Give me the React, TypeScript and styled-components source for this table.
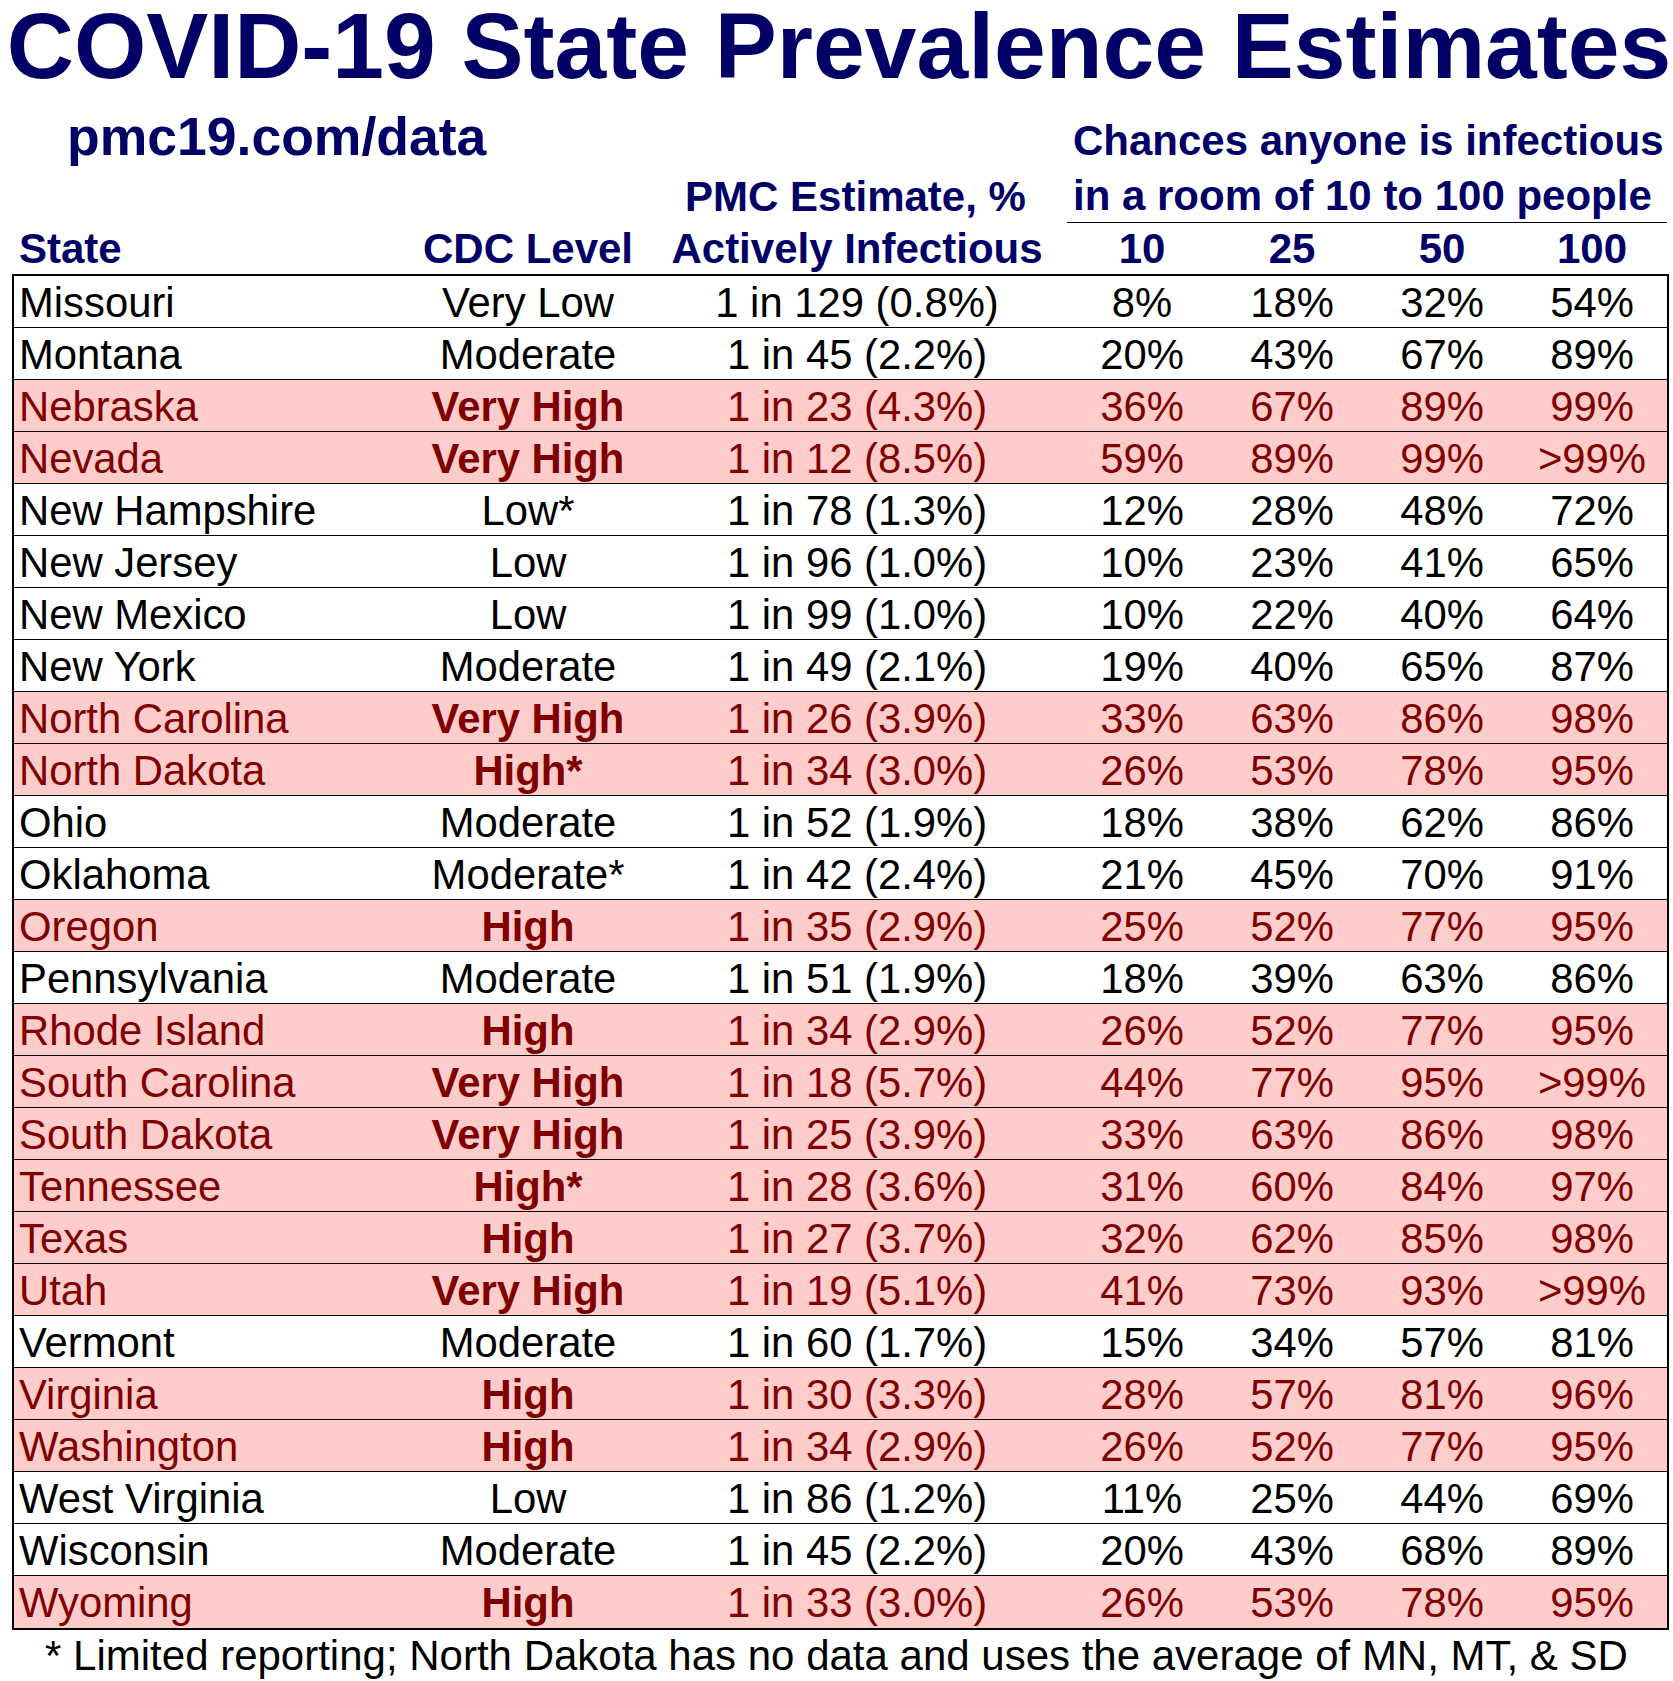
import React from "react";
import styled, { createGlobalStyle } from "styled-components";

const GlobalStyle = createGlobalStyle`
  html, body {
    margin: 0;
    padding: 0;
    background: #ffffff;
  }
  body {
    font-family: "Liberation Sans", Arial, sans-serif;
  }
`;

const NAVY = "#000066";
const DARK_RED = "#800000";
const PINK = "#ffcccc";
const COLS = "395px 238px 420px repeat(4, 150px)";

const Page = styled.div`
  width: 1673px;
  height: 1681px;
  display: flex;
  flex-direction: column;
  background: #ffffff;
`;

const Title = styled.h1`
  margin: -7px 0 -7px 0;
  padding-left: 5px;
  font-size: 93px;
  line-height: 107px;
  font-weight: 700;
  color: ${NAVY};
  text-align: center;
  white-space: nowrap;
`;

const HeaderGrid = styled.div`
  display: grid;
  grid-template-columns: ${COLS};
  grid-template-rows: 56px 53px 48px;
  padding-top: 20px;
  margin-left: 14px;
  margin-bottom: 4px;
  color: ${NAVY};
  font-weight: 700;
  font-size: 42px;
  white-space: nowrap;
`;

const SiteLink = styled.div`
  grid-column: 1 / 4;
  grid-row: 1;
  align-self: start;
  font-size: 53.5px;
  line-height: 47px;
  padding-left: 53px;
`;

const ChancesBlock = styled.div`
  grid-column: 4 / 8;
  grid-row: 1 / 3;
  display: flex;
  flex-direction: column;
  border-bottom: 1px solid #000000;
  padding-left: 6px;
  margin-bottom: -1px;
`;

const ChancesLine = styled.div<{ $h: number }>`
  line-height: ${(p) => p.$h}px;
  height: ${(p) => p.$h}px;
`;

const HeadCell = styled.div<{ $col: number; $row: number; $align?: string; $pad?: number }>`
  grid-column: ${(p) => p.$col};
  grid-row: ${(p) => p.$row};
  align-self: end;
  line-height: 42px;
  text-align: ${(p) => p.$align || "center"};
  padding-left: ${(p) => p.$pad || 0}px;
`;

const EstimateHead = styled.div`
  grid-column: 3;
  grid-row: 2;
  line-height: 53px;
  padding-top: 1px;
  padding-right: 3px;
  text-align: center;
`;

const Table = styled.div`
  margin-left: 12px;
  width: 1653px;
  border: 2px solid #000000;
  display: flex;
  flex-direction: column;
`;

const Row = styled.div<{ $hot: boolean }>`
  display: grid;
  grid-template-columns: ${COLS};
  height: 51px;
  border-bottom: 1px solid #000000;
  background: ${(p) => (p.$hot ? PINK : "#ffffff")};
  color: ${(p) => (p.$hot ? DARK_RED : "#000000")};
  font-size: 41.8px;
  line-height: 49px;
  white-space: nowrap;

  &:last-child {
    border-bottom: none;
    height: 52px;
  }
`;

const StateCell = styled.div`
  padding-top: 2px;
  padding-left: 5px;
`;

const Cell = styled.div<{ $bold?: boolean }>`
  padding-top: 2px;
  text-align: center;
  font-weight: ${(p) => (p.$bold ? 700 : 400)};
`;

const Footnote = styled.div`
  font-size: 42px;
  line-height: 42px;
  padding-top: 5px;
  text-align: center;
  color: #000000;
  white-space: nowrap;
`;

type Rec = [string, string, string, string, string, string, string, boolean];

const DATA: Rec[] = [
  ["Missouri", "Very Low", "1 in 129 (0.8%)", "8%", "18%", "32%", "54%", false],
  ["Montana", "Moderate", "1 in 45 (2.2%)", "20%", "43%", "67%", "89%", false],
  ["Nebraska", "Very High", "1 in 23 (4.3%)", "36%", "67%", "89%", "99%", true],
  ["Nevada", "Very High", "1 in 12 (8.5%)", "59%", "89%", "99%", ">99%", true],
  ["New Hampshire", "Low*", "1 in 78 (1.3%)", "12%", "28%", "48%", "72%", false],
  ["New Jersey", "Low", "1 in 96 (1.0%)", "10%", "23%", "41%", "65%", false],
  ["New Mexico", "Low", "1 in 99 (1.0%)", "10%", "22%", "40%", "64%", false],
  ["New York", "Moderate", "1 in 49 (2.1%)", "19%", "40%", "65%", "87%", false],
  ["North Carolina", "Very High", "1 in 26 (3.9%)", "33%", "63%", "86%", "98%", true],
  ["North Dakota", "High*", "1 in 34 (3.0%)", "26%", "53%", "78%", "95%", true],
  ["Ohio", "Moderate", "1 in 52 (1.9%)", "18%", "38%", "62%", "86%", false],
  ["Oklahoma", "Moderate*", "1 in 42 (2.4%)", "21%", "45%", "70%", "91%", false],
  ["Oregon", "High", "1 in 35 (2.9%)", "25%", "52%", "77%", "95%", true],
  ["Pennsylvania", "Moderate", "1 in 51 (1.9%)", "18%", "39%", "63%", "86%", false],
  ["Rhode Island", "High", "1 in 34 (2.9%)", "26%", "52%", "77%", "95%", true],
  ["South Carolina", "Very High", "1 in 18 (5.7%)", "44%", "77%", "95%", ">99%", true],
  ["South Dakota", "Very High", "1 in 25 (3.9%)", "33%", "63%", "86%", "98%", true],
  ["Tennessee", "High*", "1 in 28 (3.6%)", "31%", "60%", "84%", "97%", true],
  ["Texas", "High", "1 in 27 (3.7%)", "32%", "62%", "85%", "98%", true],
  ["Utah", "Very High", "1 in 19 (5.1%)", "41%", "73%", "93%", ">99%", true],
  ["Vermont", "Moderate", "1 in 60 (1.7%)", "15%", "34%", "57%", "81%", false],
  ["Virginia", "High", "1 in 30 (3.3%)", "28%", "57%", "81%", "96%", true],
  ["Washington", "High", "1 in 34 (2.9%)", "26%", "52%", "77%", "95%", true],
  ["West Virginia", "Low", "1 in 86 (1.2%)", "11%", "25%", "44%", "69%", false],
  ["Wisconsin", "Moderate", "1 in 45 (2.2%)", "20%", "43%", "68%", "89%", false],
  ["Wyoming", "High", "1 in 33 (3.0%)", "26%", "53%", "78%", "95%", true],
];

export default function App() {
  return (
    <Page>
      <GlobalStyle />
      <Title>COVID-19 State Prevalence Estimates</Title>
      <HeaderGrid>
        <SiteLink>pmc19.com/data</SiteLink>
        <ChancesBlock>
          <ChancesLine $h={56}>Chances anyone is infectious</ChancesLine>
          <ChancesLine $h={53}>in a room of 10 to 100 people</ChancesLine>
        </ChancesBlock>
        <EstimateHead>PMC Estimate, %</EstimateHead>
        <HeadCell $col={1} $row={3} $align="left" $pad={5}>State</HeadCell>
        <HeadCell $col={2} $row={3}>CDC Level</HeadCell>
        <HeadCell $col={3} $row={3}>Actively Infectious</HeadCell>
        <HeadCell $col={4} $row={3}>10</HeadCell>
        <HeadCell $col={5} $row={3}>25</HeadCell>
        <HeadCell $col={6} $row={3}>50</HeadCell>
        <HeadCell $col={7} $row={3}>100</HeadCell>
      </HeaderGrid>
      <Table>
        {DATA.map((r) => (
          <Row key={r[0]} $hot={r[7]}>
            <StateCell>{r[0]}</StateCell>
            <Cell $bold={r[7]}>{r[1]}</Cell>
            <Cell>{r[2]}</Cell>
            <Cell>{r[3]}</Cell>
            <Cell>{r[4]}</Cell>
            <Cell>{r[5]}</Cell>
            <Cell>{r[6]}</Cell>
          </Row>
        ))}
      </Table>
      <Footnote>* Limited reporting; North Dakota has no data and uses the average of MN, MT, &amp; SD</Footnote>
    </Page>
  );
}
